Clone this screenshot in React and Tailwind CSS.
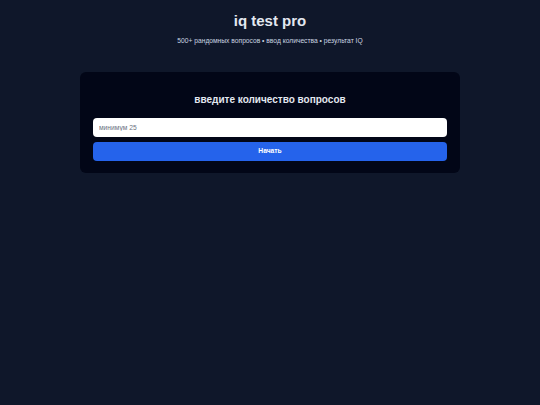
export default function App() {
  return (
    <div className="min-h-screen w-full bg-[#0f172a] flex flex-col items-center" style={{ fontFamily: '"Liberation Sans", Arial, sans-serif' }}>
      <h1 className="mt-[12px] text-[15px] leading-[18px] font-bold text-[#e2e8f0]">iq test pro</h1>
      <p className="mt-[6px] text-[6.7px] leading-[9px] text-[#cbd5e1]">500+ рандомных вопросов • ввод количества • результат IQ</p>
      <div className="mt-[27px] w-[380px] rounded-[6px] bg-[#020617] px-[13px] pt-[21px] pb-[12px] flex flex-col">
        <h2 className="text-center text-[10px] leading-[14px] font-bold text-[#e2e8f0]">введите количество вопросов</h2>
        <input
          className="mt-[11px] h-[19px] w-full rounded-[4px] bg-white px-[6px] text-[6.7px] text-[#111] outline-none placeholder:text-[#6b7280]"
          placeholder="минимум 25"
        />
        <button className="mt-[5px] h-[19px] w-full rounded-[4px] bg-[#2563eb] text-[6.7px] font-bold text-white">Начать</button>
      </div>
    </div>
  );
}
